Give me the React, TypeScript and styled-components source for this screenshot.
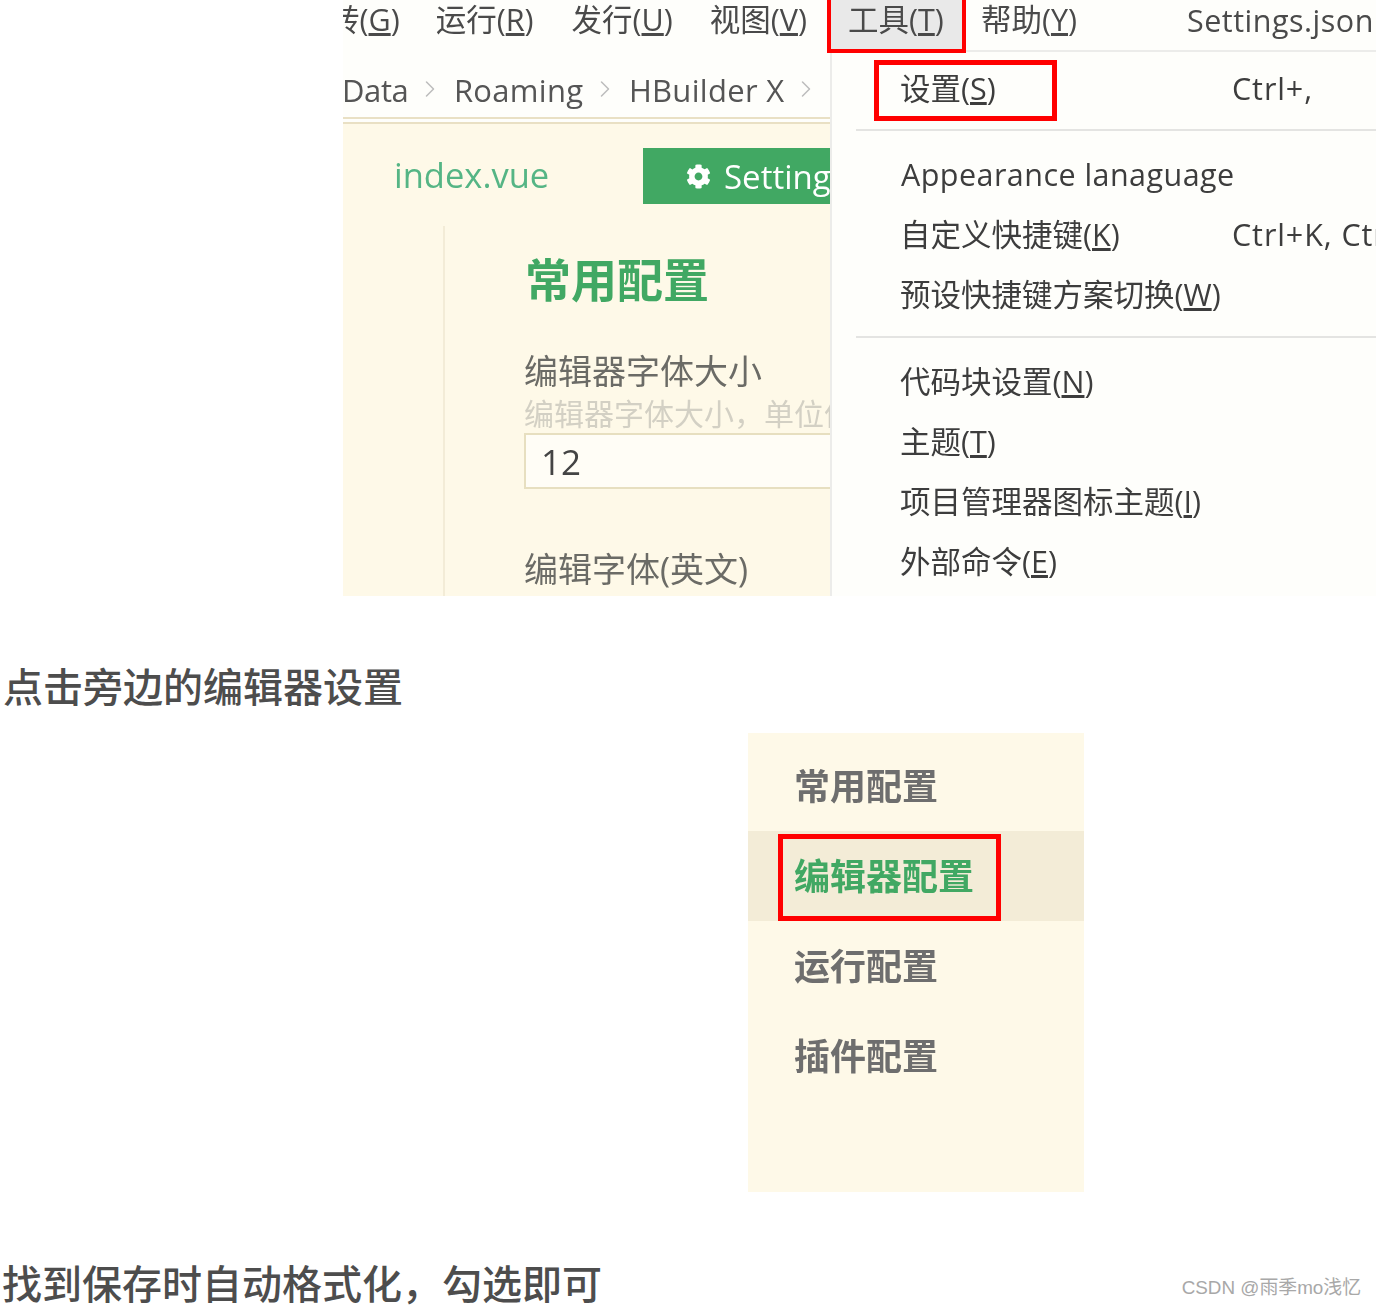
import React from 'react';
import styled, { createGlobalStyle } from 'styled-components';
import { FaCog } from 'react-icons/fa';
import { ChevronRight } from 'lucide-react';

const GlobalStyle = createGlobalStyle`
  html, body {
    margin: 0;
    padding: 0;
    background: #fff;
  }
  body {
    font-family: "Open Sans", "Noto Sans CJK SC", sans-serif;
  }
`;

const Page = styled.div`
  position: relative;
  width: 1376px;
  height: 1306px;
  overflow: hidden;
`;

const Shot = styled.div`
  margin-left: 343px;
  width: 1033px;
  height: 596px;
  display: flex;
  flex-direction: column;
  overflow: hidden;
  background: #fefefb;
  color: #4a4a4a;
  filter: blur(0.4px);
`;

const MenuBar = styled.div`
  height: 50px;
  flex: none;
  display: flex;
  align-items: flex-start;
  font-size: 30.5px;
  line-height: 39px;
  white-space: nowrap;
`;

const BarItem = styled.div<{ $gap: number }>`
  margin-left: ${p => p.$gap}px;
  flex: none;
`;

const BarFile = styled(BarItem)`
  letter-spacing: 0.5px;
  padding-top: 1px;
`;

const ActiveBarItem = styled.div`
  box-sizing: border-box;
  flex: none;
  height: 53px;
  width: 139px;
  margin-left: 20px;
  padding-left: 17px;
  background: #e9e9e9;
  border: 4px solid #ff0000;
  border-top: none;
  position: relative;
  z-index: 2;
`;

const Body = styled.div`
  flex: 1;
  display: flex;
  min-height: 0;
`;

const LeftPane = styled.div`
  width: 487px;
  flex: none;
  display: flex;
  flex-direction: column;
  overflow: hidden;
`;

const Crumbs = styled.div`
  box-sizing: border-box;
  height: 74px;
  flex: none;
  display: flex;
  align-items: flex-start;
  padding-top: 19px;
  font-size: 31px;
  line-height: 42px;
  color: #555;
  border-bottom: 2px solid #e9e0c4;
  position: relative;
  &::before {
    content: '';
    position: absolute;
    left: 0;
    right: 0;
    top: 67px;
    height: 2px;
    background: #e9e0c4;
  }
`;

const Crumb = styled.span`
  flex: none;
  letter-spacing: 0.3px;
  &:first-child {
    margin-left: -1px;
    letter-spacing: -0.4px;
  }
`;

const CrumbArrow = styled(ChevronRight)`
  flex: none;
  margin: 6px 9.5px 0 8px;
  color: #bdbdbd;
`;

const Content = styled.div`
  flex: 1;
  background: #fef9e8;
  display: flex;
  flex-direction: column;
  min-height: 0;
`;

const Tabs = styled.div`
  height: 102px;
  flex: none;
  display: flex;
  align-items: flex-start;
  padding-top: 24px;
  box-sizing: border-box;
`;

const TabFile = styled.div`
  margin-left: 51px;
  width: 249px;
  flex: none;
  font-size: 34.5px;
  line-height: 54px;
  color: #55b585;
`;

const TabActive = styled.div`
  flex: 1;
  height: 56px;
  display: flex;
  align-items: center;
  padding-left: 43px;
  gap: 13px;
  background: #41a863;
  color: #fff;
  font-size: 33px;
  white-space: nowrap;
  overflow: hidden;
`;

const TabIcon = styled(FaCog)`
  flex: none;
`;

const Pane = styled.div`
  flex: 1;
  margin-left: 100px;
  padding-left: 79px;
  border-left: 2px solid #f3ecd7;
  display: flex;
  flex-direction: column;
  align-items: flex-start;
  white-space: nowrap;
`;

const PaneTitle = styled.div`
  margin-left: 1px;
  font-size: 46px;
  line-height: 60px;
  margin-top: 23px;
  font-weight: 700;
  color: #41a863;
`;

const FieldLabel = styled.div<{ $top: number }>`
  margin-top: ${p => p.$top}px;
  font-size: 34px;
  line-height: 46px;
  color: #6b6b66;
`;

const FieldHint = styled.div`
  font-size: 30px;
  line-height: 40px;
  color: #d3d0c4;
`;

const NumberBox = styled.div`
  box-sizing: border-box;
  width: 340px;
  height: 56px;
  margin-top: -1px;
  padding-left: 15px;
  font-size: 35px;
  line-height: 54px;
  color: #444;
  background: #fffdf6;
  border: 2px solid #e7dfc0;
  flex: none;
`;

const Menu = styled.div`
  flex: 1;
  border-left: 2px solid #ececea;
  border-top: 2px solid #ececea;
  padding-left: 24px;
  min-width: 0;
  font-size: 30.5px;
  white-space: nowrap;
  color: #3d3d3d;
  overflow: hidden;
`;

const MenuGroup = styled.div<{ $top: number; $bottom: number }>`
  padding: ${p => p.$top}px 0 ${p => p.$bottom}px;
  & + & {
    border-top: 2px solid #e4e4e2;
  }
`;

const MenuRow = styled.div`
  height: 60px;
  display: flex;
  align-items: center;
  padding-left: 44px;
`;

const MenuText = styled.span`
  width: 332px;
  flex: none;
`;

const MenuLatin = styled(MenuText)`
  padding: 2px 0 0 1px;
  letter-spacing: 0.45px;
`;

const Shortcut = styled.span`
  flex: none;
  margin-top: 2px;
  letter-spacing: 0.9px;
`;

const Hotbox = styled.span`
  position: absolute;
  left: 874px;
  top: 60px;
  width: 183px;
  height: 61px;
  box-sizing: border-box;
  border: 5px solid #ff0000;
  z-index: 3;
`;

const Caption = styled.div<{ $top: number; $left: number }>`
  margin-top: ${p => p.$top}px;
  margin-left: ${p => p.$left}px;
  font-family: "Noto Sans CJK SC", sans-serif;
  font-size: 40px;
  line-height: 56px;
  font-weight: 500;
  color: #4d4d4d;
  white-space: nowrap;
`;

const SideShot = styled.div`
  margin: 20px 0 0 748px;
  width: 336px;
  height: 459px;
  box-sizing: border-box;
  padding-top: 8px;
  background: #fef9e8;
  font-family: "Noto Sans CJK SC", sans-serif;
  filter: blur(0.4px);
`;

const SideRow = styled.div<{ $active?: boolean }>`
  position: relative;
  box-sizing: border-box;
  height: 90px;
  display: flex;
  align-items: center;
  padding: 0 0 4px 46px;
  font-size: 36px;
  font-weight: 700;
  color: ${p => (p.$active ? '#41a863' : '#6e6e6e')};
  background: ${p => (p.$active ? '#f3ecd7' : 'transparent')};
`;

const SideMark = styled.span`
  position: absolute;
  left: 30px;
  top: 3px;
  width: 223px;
  height: 87px;
  box-sizing: border-box;
  border: 5px solid #ff0000;
`;

const Watermark = styled.div`
  position: absolute;
  right: 15px;
  bottom: 4px;
  font-family: "Liberation Sans", "Noto Sans CJK SC", sans-serif;
  font-size: 18.85px;
  line-height: 28px;
  color: #a8a8a8;
`;

const Key = ({ k }: { k: string }) => (
  <>
    (<u>{k}</u>)
  </>
);

const App: React.FC = () => (
  <Page>
    <GlobalStyle />
    <Shot>
      <MenuBar>
        <BarItem $gap={-14}>转<Key k="G" /></BarItem>
        <BarItem $gap={36}>运行<Key k="R" /></BarItem>
        <BarItem $gap={38}>发行<Key k="U" /></BarItem>
        <BarItem $gap={37}>视图<Key k="V" /></BarItem>
        <ActiveBarItem>工具<Key k="T" /></ActiveBarItem>
        <BarItem $gap={15}>帮助<Key k="Y" /></BarItem>
        <BarFile $gap={110}>Settings.json</BarFile>
      </MenuBar>
      <Body>
        <LeftPane>
          <Crumbs>
            <Crumb>Data</Crumb>
            <CrumbArrow size={28} strokeWidth={1.3} />
            <Crumb>Roaming</Crumb>
            <CrumbArrow size={28} strokeWidth={1.3} />
            <Crumb>HBuilder X</Crumb>
            <CrumbArrow size={28} strokeWidth={1.3} />
          </Crumbs>
          <Content>
            <Tabs>
              <TabFile>index.vue</TabFile>
              <TabActive>
                <TabIcon size={25} />
                Settings
              </TabActive>
            </Tabs>
            <Pane>
              <PaneTitle>常用配置</PaneTitle>
              <FieldLabel $top={39}>编辑器字体大小</FieldLabel>
              <FieldHint>编辑器字体大小，单位像素</FieldHint>
              <NumberBox>12</NumberBox>
              <FieldLabel $top={57}>编辑字体(英文)</FieldLabel>
            </Pane>
          </Content>
        </LeftPane>
        <Menu>
          <MenuGroup $top={5} $bottom={12}>
            <MenuRow>
              <MenuText>设置<Key k="S" /></MenuText>
              <Shortcut>Ctrl+,</Shortcut>
            </MenuRow>
          </MenuGroup>
          <MenuGroup $top={12} $bottom={13}>
            <MenuRow>
              <MenuLatin>Appearance lanaguage</MenuLatin>
            </MenuRow>
            <MenuRow>
              <MenuText>自定义快捷键<Key k="K" /></MenuText>
              <Shortcut>Ctrl+K, Ctrl+S</Shortcut>
            </MenuRow>
            <MenuRow>
              <MenuText>预设快捷键方案切换<Key k="W" /></MenuText>
            </MenuRow>
          </MenuGroup>
          <MenuGroup $top={12} $bottom={0}>
            <MenuRow>
              <MenuText>代码块设置<Key k="N" /></MenuText>
            </MenuRow>
            <MenuRow>
              <MenuText>主题<Key k="T" /></MenuText>
            </MenuRow>
            <MenuRow>
              <MenuText>项目管理器图标主题<Key k="I" /></MenuText>
            </MenuRow>
            <MenuRow>
              <MenuText>外部命令<Key k="E" /></MenuText>
            </MenuRow>
          </MenuGroup>
        </Menu>
      </Body>
    </Shot>
    <Hotbox />
    <Caption $top={61} $left={3}>点击旁边的编辑器设置</Caption>
    <SideShot>
      <SideRow>常用配置</SideRow>
      <SideRow $active>
        <SideMark />
        编辑器配置
      </SideRow>
      <SideRow>运行配置</SideRow>
      <SideRow>插件配置</SideRow>
    </SideShot>
    <Caption $top={62} $left={2}>找到保存时自动格式化，勾选即可</Caption>
    <Watermark>CSDN @雨季mo浅忆</Watermark>
  </Page>
);

export default App;
